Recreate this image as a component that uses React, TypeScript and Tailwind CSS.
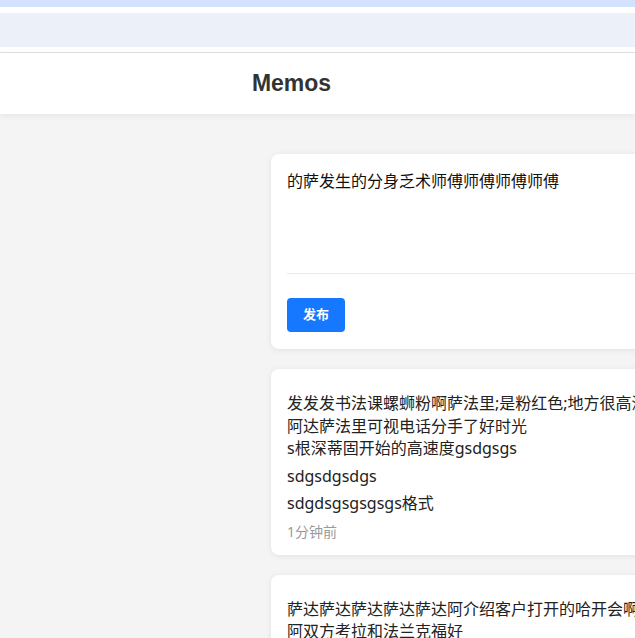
export default function App() {
  const font = { fontFamily: '"Noto Sans", "Noto Sans CJK SC", sans-serif' }
  return (
    <div className="w-screen h-screen overflow-hidden bg-[#f4f4f4] flex flex-col" style={font}>
      {/* browser-ish bands */}
      <div className="h-[7px] bg-[#d3e3fd] shrink-0" />
      <div className="h-[6px] bg-white shrink-0" />
      <div className="h-[34px] bg-[#ebf0f9] shrink-0" />
      <div className="h-[6px] bg-white border-b border-[#e0e0e0] shrink-0" />

      {/* header */}
      <header className="h-[61px] shrink-0 bg-white shadow-[0_2px_6px_rgba(0,0,0,0.06)] relative z-10">
        <div className="w-[583px] h-full flex items-center justify-center">
          <h1 className="text-[23px] font-bold text-[#333]" style={{ fontFamily: '"Liberation Sans", Arial, sans-serif' }}>
            Memos
          </h1>
        </div>
      </header>

      {/* memo list */}
      <main className="flex flex-col gap-5 pt-10 pl-[271px]">
        {/* editor */}
        <div className="w-[600px] shrink-0 bg-white rounded-lg shadow-[0_1px_6px_rgba(0,0,0,0.08)] px-4 pt-4 pb-[17px]">
          <div className="h-[103px] text-[16px] leading-[22px] text-[#111]">
            的萨发生的分身乏术师傅师傅师傅师傅
          </div>
          <div className="h-px bg-[#ebebeb]" />
          <button className="mt-6 w-[58px] h-[34px] rounded bg-[#1677ff] text-white text-[13px] font-semibold">
            发布
          </button>
        </div>

        {/* memo 1 */}
        <div className="w-[600px] shrink-0 bg-white rounded-lg shadow-[0_1px_6px_rgba(0,0,0,0.08)] px-4 pt-[23px] pb-[13px] text-[16px] leading-[22.5px] text-[#222] whitespace-nowrap">
          <p className="mb-[5px]">
            发发发书法课螺蛳粉啊萨法里;是粉红色;地方很高深
            <br />
            阿达萨法里可视电话分手了好时光
            <br />
            s根深蒂固开始的高速度gsdgsgs
          </p>
          <p className="mb-[5px]">sdgsdgsdgs</p>
          <p>sdgdsgsgsgsgs格式</p>
          <div className="mt-[7px] text-[14px] leading-5 text-[#999]">1分钟前</div>
        </div>

        {/* memo 2 */}
        <div className="w-[600px] shrink-0 bg-white rounded-lg shadow-[0_1px_6px_rgba(0,0,0,0.08)] px-4 pt-[23px] pb-3 text-[16px] leading-[22.5px] text-[#222] whitespace-nowrap">
          <p>
            萨达萨达萨达萨达萨达阿介绍客户打开的哈开会啊
            <br />
            阿双方考拉和法兰克福好
          </p>
        </div>
      </main>
    </div>
  )
}
